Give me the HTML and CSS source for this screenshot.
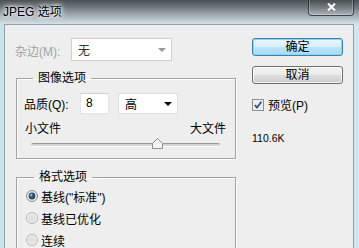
FILE: index.html
```html
<!DOCTYPE html>
<html lang="zh-CN">
<head>
  <meta charset="UTF-8">
  <title>JPEG 选项</title>
  <link rel="stylesheet" href="styles.css">
</head>
<body>
  <div class="window">
    <div class="titlebar">
      <span class="title">JPEG 选项</span>
      <span class="close">
        <svg width="9" height="8" viewBox="0 0 9 8"><path d="M1 0.5 L8 7.5 M8 0.5 L1 7.5" stroke="#fff" stroke-width="2"/></svg>
      </span>
    </div>

    <div class="client">
      <div class="main">
        <div class="matte">
          <span class="label disabled">杂边(M):</span>
          <div class="select select-disabled">
            <span>无</span>
            <span class="arrow grey"></span>
          </div>
        </div>

        <fieldset class="group image">
          <legend>图像选项</legend>
          <div class="quality">
            <span class="label">品质(Q):</span>
            <div class="input">8</div>
            <div class="select small">
              <span>高</span>
              <span class="arrow"></span>
            </div>
          </div>
          <div class="scale">
            <span>小文件</span>
            <span>大文件</span>
          </div>
          <div class="slider">
            <div class="track"></div>
            <svg class="thumb" width="11" height="11" viewBox="0 0 11 11">
              <path d="M5.5 0.5 L10.5 5.5 V10.5 H0.5 V5.5 Z" fill="#f4f4f4" stroke="#8c8c8c"/>
              <path d="M5.5 2 L9.5 6 V9.5" fill="none" stroke="#fff"/>
            </svg>
          </div>
        </fieldset>

        <fieldset class="group format">
          <legend>格式选项</legend>
          <div class="radio">
            <svg width="12" height="12" viewBox="0 0 12 12">
              <circle cx="6" cy="6" r="5.5" fill="#e8e8e8" stroke="#8d8d8d"/>
              <circle cx="6" cy="6" r="3.4" fill="#2c4f6e"/>
              <circle cx="5.2" cy="5.1" r="1.3" fill="#8fb6d3"/>
            </svg>
            <span>基线("标准")</span>
          </div>
          <div class="radio">
            <svg width="12" height="12" viewBox="0 0 12 12">
              <circle cx="6" cy="6" r="5.5" fill="#f0f0f0" stroke="#b4b4b4"/>
              <circle cx="6" cy="6" r="3.8" fill="#e2e2e2"/>
            </svg>
            <span>基线已优化</span>
          </div>
          <div class="radio">
            <svg width="12" height="12" viewBox="0 0 12 12">
              <circle cx="6" cy="6" r="5.5" fill="#f0f0f0" stroke="#b4b4b4"/>
              <circle cx="6" cy="6" r="3.8" fill="#e2e2e2"/>
            </svg>
            <span>连续</span>
          </div>
        </fieldset>
      </div>

      <div class="side">
        <button class="btn default">确定</button>
        <button class="btn">取消</button>
        <div class="check">
          <svg width="12" height="12" viewBox="0 0 12 12">
            <rect x="0.5" y="0.5" width="11" height="11" fill="#f2f2f2" stroke="#8e8f8f"/>
            <rect x="1.5" y="1.5" width="9" height="9" fill="#e9eef2"/>
            <path d="M2.8 6 L5 8.6 L9.4 2.8" fill="none" stroke="#34518c" stroke-width="1.8"/>
          </svg>
          <span>预览(P)</span>
        </div>
        <div class="size">110.6K</div>
      </div>
    </div>
  </div>
</body>
</html>
```

FILE: styles.css
```css
* {
  box-sizing: border-box;
}

body {
  margin: 0;
  width: 359px;
  height: 248px;
  overflow: hidden;
  font-family: "Liberation Sans", "Noto Sans CJK SC", sans-serif;
  font-size: 12px;
  color: #000;
  background: #d3e8f2;
}

.window {
  height: 248px;
  display: flex;
  flex-direction: column;
  overflow: hidden;
  background: linear-gradient(to right, #c8e2ee, #d8ecf5 50%, #cfe6f1);
}

/* title bar */
.titlebar {
  height: 24px;
  flex: none;
  display: flex;
  justify-content: space-between;
  align-items: flex-start;
  padding-left: 3px;
  background: linear-gradient(#4c5156, #676e73 6px, #9aa4aa 14px, #c4cfd5 21px, #cfe3ee 24px);
}

.title {
  padding: 5px 4px 0 0;
  line-height: 14px;
  text-shadow: 0 0 6px #fff, 0 0 6px #fff, 0 0 3px #fff;
}

.close {
  width: 46px;
  height: 17px;
  margin: -1px 5px 0 0;
  display: flex;
  align-items: center;
  justify-content: center;
  border: 1px solid rgba(35, 38, 42, 0.75);
  border-top: none;
  border-radius: 0 0 4px 4px;
  box-shadow: inset 0 0 0 1px rgba(255, 255, 255, 0.25);
  background: linear-gradient(rgba(0, 0, 0, 0.05), rgba(255, 255, 255, 0.12));
}

/* dialog body */
.client {
  flex: 1;
  min-height: 0;
  display: flex;
  margin: 0 5px 0 4px;
  padding: 13px 0 0 11px;
  border: 1px solid #959fa5;
  border-bottom: none;
  background: #eeeeee;
}

.main {
  width: 220px;
}

.label {
  margin-left: -1px;
}

.disabled {
  color: #a2a2a2;
}

.matte {
  display: flex;
  align-items: center;
  height: 23px;
  padding-top: 1px;
}

.matte .label {
  width: 56px;
}

.select {
  display: flex;
  align-items: center;
  justify-content: space-between;
  background: #fff;
  border: 1px solid #dedede;
}

.select-disabled {
  width: 101px;
  height: 23px;
  margin-top: -1px;
  padding: 0 5px 0 6px;
  color: #333;
  border-color: #cfcfcf;
}

.arrow {
  width: 0;
  height: 0;
  border-left: 4px solid transparent;
  border-right: 4px solid transparent;
  border-top: 4px solid #000;
}

.arrow.grey {
  border-top-color: #9a9a9a;
}

/* group boxes */
.group {
  margin: 9px 0 0;
  padding: 7px 9px 7px 8px;
  width: 220px;
  min-width: 0;
  border: 1px solid #a3a3a3;
  box-shadow: inset 1px 1px 0 #fff, 1px 1px 0 #fff;
}

.group legend {
  height: 16px;
  margin-left: 8px;
  padding: 0 5px;
  line-height: 16px;
}

.format {
  margin-top: 10px;
  padding: 0 9px;
  height: 100px;
}

.quality {
  display: flex;
  align-items: center;
  height: 21px;
}

.quality .label {
  width: 56px;
}

.input {
  width: 29px;
  height: 21px;
  padding-left: 5px;
  line-height: 19px;
  background: #fff;
  border: 1px solid #e4e4e4;
  border-top-color: #d2d2d2;
}

.select.small {
  width: 60px;
  height: 21px;
  margin-left: 9px;
  padding: 0 5px 0 6px;
}

.scale {
  display: flex;
  justify-content: space-between;
  height: 15px;
  margin-top: 8px;
  line-height: 15px;
}

.slider {
  position: relative;
  height: 14px;
  padding: 6px 6px 0;
}

.track {
  height: 4px;
  border-radius: 2px;
  background: #d4d4d4;
  border-top: 1px solid #9b9b9b;
  border-bottom: 1px solid #fff;
}

.thumb {
  position: absolute;
  left: 127px;
  top: 1px;
}

.radio {
  display: flex;
  align-items: center;
  gap: 3px;
  height: 22px;
}

/* right column */
.side {
  width: 91px;
  margin-left: 16px;
  display: flex;
  flex-direction: column;
  align-items: flex-start;
}

.btn {
  width: 91px;
  height: 18px;
  padding: 0;
  font: inherit;
  line-height: 16px;
  color: #000;
  border: 1px solid #707070;
  border-radius: 3px;
  background: linear-gradient(#f2f2f2, #ebebeb 50%, #dddddd 50%, #cfcfcf);
  box-shadow: inset 0 0 0 1px rgba(255, 255, 255, 0.7);
}

.btn + .btn {
  margin-top: 10px;
}

.btn.default {
  border-color: #3c7fb1;
  background: linear-gradient(#e9f6fd, #d6eefb 50%, #bce4f9 50%, #a7d9f5);
  box-shadow: inset 0 0 0 1px #8ed4f4;
}

.check {
  display: flex;
  align-items: center;
  gap: 4px;
  margin-top: 14px;
  height: 13px;
}

.size {
  margin-top: 21px;
  font-size: 10.5px;
  line-height: 12px;
}
```
